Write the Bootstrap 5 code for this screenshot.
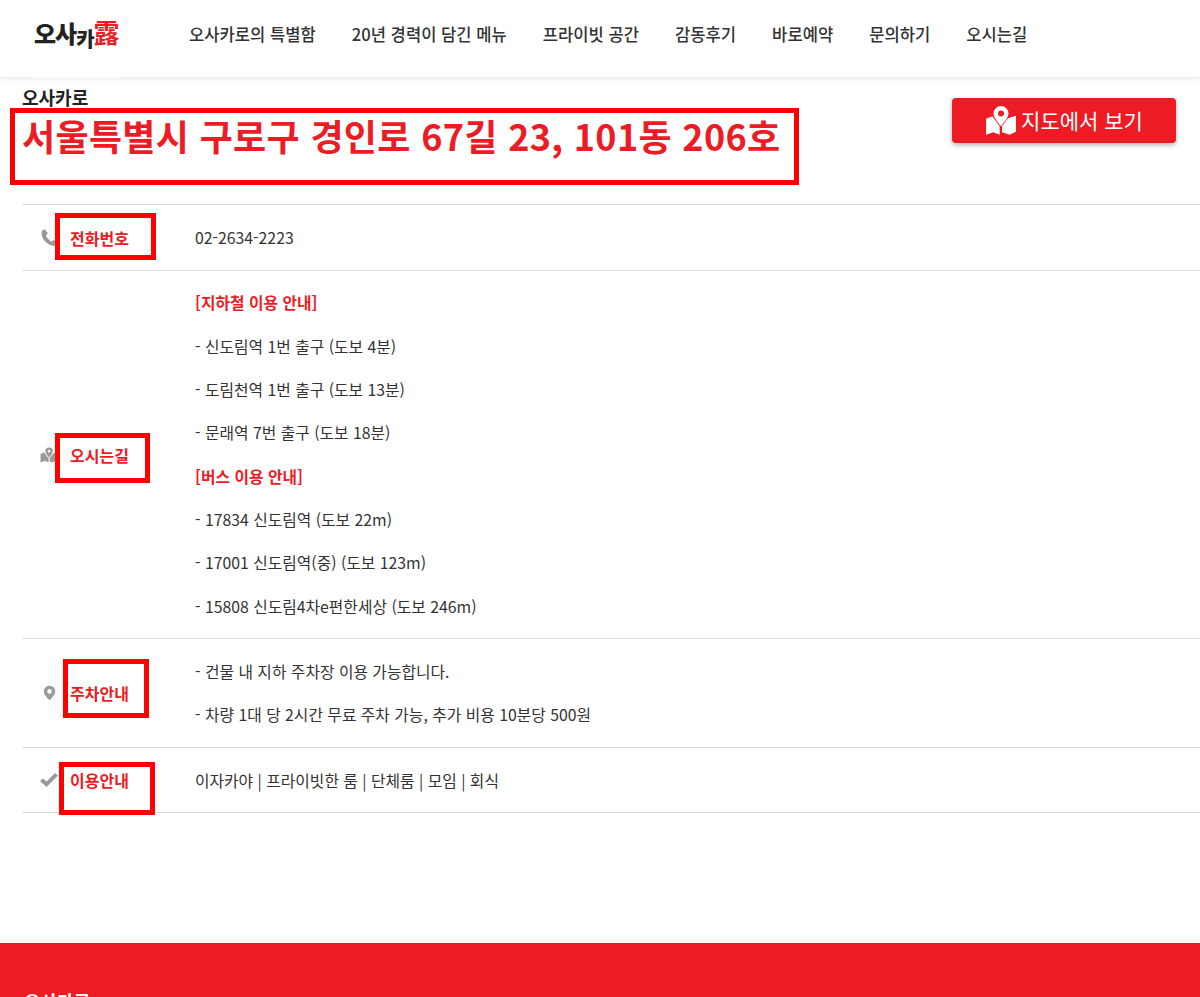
<!DOCTYPE html>
<html lang="ko">
<head>
  <meta charset="UTF-8" />
  <meta name="viewport" content="width=device-width, initial-scale=1.0"/>
  <title>오사카로 오시는길</title>
  <link href="https://cdn.jsdelivr.net/npm/bootstrap@5.3.3/dist/css/bootstrap.min.css" rel="stylesheet">
  <style>
    html, body { margin: 0; }
    body {
      font-family: "Noto Sans CJK KR", "Noto Sans", sans-serif;
      color: #333;
      background: #fff;
      height: 997px;
      overflow: hidden;
    }
    .top-bar {
      height: 77px;
      padding: 0;
      background: #fff;
      box-shadow: 0 1px 5px rgba(0,0,0,.12);
    }
    .logo-box {
      width: 86px;
      height: 78px;
      margin-left: 34px;
      margin-right: 69px;
      background: #fff;
      position: relative;
      padding-top: 15px;
      white-space: nowrap;
      line-height: 34px;
      text-decoration: none;
    }
    .logo-ko { font-size: 24px; font-weight: 900; color: #222; letter-spacing: -1px; }
    .logo-ko small { font-size: 20px; font-weight: 900; vertical-align: -4px; letter-spacing: -2px; }
    .logo-han { font-size: 26px; font-weight: 700; color: #ed1c24; margin-left: 1px; }
    .top-menu { gap: 36px; margin-top: -9px; }
    .top-menu .nav-link {
      padding: 0;
      font-size: 16.6px;
      font-weight: 500;
      color: #333;
    }
    .place-head {
      padding: 9px 24px 0 22px;
      height: 127px;
    }
    .place-name { font-size: 18px; font-weight: 700; color: #222; line-height: 22px; }
    .place-addr { font-size: 36px; font-weight: 700; color: #ed1c24; line-height: 55px; margin: 0; letter-spacing: .33px; }
    .map-btn {
      width: 224px;
      height: 45px;
      margin-top: 12px;
      padding: 0;
      background: #ed1c24;
      border: 0;
      border-radius: 4px;
      box-shadow: 0 2px 5px rgba(0,0,0,.3);
      color: #fff;
      font-size: 21px;
      font-weight: 400;
      line-height: 1;
    }
    .info-list { margin-left: 22px; border-top: 1px solid #ddd; }
    .info-row {
      display: flex;
      align-items: center;
      position: relative;
      border-bottom: 1px solid #ddd;
      font-size: 15.8px;
    }
    .info-icon { width: 48px; padding-left: 18px; flex: none; display: flex; }
    .info-icon svg { fill: #999; }
    .info-label { width: 125px; flex: none; color: #ed1c24; font-weight: 700; font-size: 16px; }
    .info-body p { margin: 0; line-height: 23px; }
    .info-body p + p { margin-top: 20.3px; }
    .info-red { color: #ed1c24; font-weight: 700; }
    .mark-box { position: absolute; border: 5px solid #f00; pointer-events: none; }
    .page-foot {
      margin-top: 130px;
      height: 120px;
      background: #ed1c24;
      color: #fff;
      padding: 47px 24px;
      font-size: 18px;
      font-weight: 700;
      line-height: 22px;
    }
  </style>
</head>
<body>
  <nav class="navbar top-bar align-items-center flex-nowrap justify-content-start">
    <a class="logo-box" href="#"><span class="logo-ko">오사<small>카</small></span><span class="logo-han">露</span></a>
    <ul class="nav top-menu">
      <li class="nav-item"><a class="nav-link" href="#">오사카로의 특별함</a></li>
      <li class="nav-item"><a class="nav-link" href="#">20년 경력이 담긴 메뉴</a></li>
      <li class="nav-item"><a class="nav-link" href="#">프라이빗 공간</a></li>
      <li class="nav-item"><a class="nav-link" href="#">감동후기</a></li>
      <li class="nav-item"><a class="nav-link" href="#">바로예약</a></li>
      <li class="nav-item"><a class="nav-link" href="#">문의하기</a></li>
      <li class="nav-item"><a class="nav-link" href="#">오시는길</a></li>
    </ul>
  </nav>

  <div class="place-head d-flex justify-content-between align-items-start position-relative">
    <div>
      <div class="place-name">오사카로</div>
      <h1 class="place-addr">서울특별시 구로구 경인로 67길 23, 101동 206호</h1>
    </div>
    <button class="btn map-btn d-flex align-items-center justify-content-center gap-1" type="button">
      <svg width="32" height="32" viewBox="0 0 30 30" fill="#fff"><path d="M15 1a7 7 0 0 0-7 7c0 4 4 8 7 12 3-4 7-8 7-12a7 7 0 0 0-7-7zm0 4.200a2.800 2.800 0 1 1 0 5.600 2.800 2.800 0 0 1 0-5.600z"/><path d="M1 13l6-2.500.8 1.500 6 8V28l-6-2.500L1 28zM16 20l5.500-7.500 7.500-2.500v15l-6 3-7-2.500z"/></svg>
      <span>지도에서 보기</span>
    </button>
    <div class="mark-box" style="left:10px;top:31px;width:789px;height:77px"></div>
  </div>

  <div class="info-list">
    <div class="info-row" style="height:66px">
      <div class="info-icon"><svg width="19" height="19" viewBox="0 0 24 24"><path d="M6 1.500 2.500 3.500C1 8 3 13 6.500 17c3.500 3.500 8.500 6 12.500 5.500l3-3.500-4.500-4-3 2C12 16 8.500 12 7.500 9l2.500-2.500z"/></svg></div>
      <div class="info-label">전화번호</div>
      <div class="info-body"><p>02-2634-2223</p></div>
      <div class="mark-box" style="left:33px;top:8px;width:101px;height:47px"></div>
    </div>
    <div class="info-row" style="height:368px">
      <div class="info-icon"><svg width="16" height="16" viewBox="0 0 30 30"><path d="M17 1a7 7 0 0 0-7 7c0 4 4 8 7 12 3-4 7-8 7-12a7 7 0 0 0-7-7zm0 4.500a2.500 2.500 0 1 1 0 5 2.500 2.500 0 0 1 0-5z"/><path d="M1 13l7-3 1 2 7 9v8l-7-3-8 3zM18 21l6-8 6-3v16l-7 3-5-2z"/></svg></div>
      <div class="info-label">오시는길</div>
      <div class="info-body">
        <p class="info-red">[지하철 이용 안내]</p>
        <p>- 신도림역 1번 출구 (도보 4분)</p>
        <p>- 도림천역 1번 출구 (도보 13분)</p>
        <p>- 문래역 7번 출구 (도보 18분)</p>
        <p class="info-red">[버스 이용 안내]</p>
        <p>- 17834 신도림역 (도보 22m)</p>
        <p>- 17001 신도림역(중) (도보 123m)</p>
        <p>- 15808 신도림4차e편한세상 (도보 246m)</p>
      </div>
      <div class="mark-box" style="left:33px;top:162px;width:95px;height:50px"></div>
    </div>
    <div class="info-row" style="height:109px">
      <div class="info-icon"><svg width="16" height="18" viewBox="0 0 16 18" style="margin-left:3px;width:13px"><path d="M8 0a7 7 0 0 0-7 7c0 4 4 7.500 7 11 3-3.500 7-7 7-11a7 7 0 0 0-7-7zm0 4.200a2.800 2.800 0 1 1 0 5.600 2.800 2.800 0 0 1 0-5.600z"/></svg></div>
      <div class="info-label">주차안내</div>
      <div class="info-body">
        <p>- 건물 내 지하 주차장 이용 가능합니다.</p>
        <p>- 차량 1대 당 2시간 무료 주차 가능, 추가 비용 10분당 500원</p>
      </div>
      <div class="mark-box" style="left:41px;top:20px;width:86px;height:59px"></div>
    </div>
    <div class="info-row" style="height:65px">
      <div class="info-icon"><svg width="18" height="14" viewBox="0 0 18 14"><path d="M0 8l3-2.500 3.500 3L15 0l3 2.500L6.500 14z"/></svg></div>
      <div class="info-label">이용안내</div>
      <div class="info-body"><p>이자카야 | 프라이빗한 룸 | 단체룸 | 모임 | 회식</p></div>
      <div class="mark-box" style="left:37px;top:14px;width:96px;height:53px"></div>
    </div>
  </div>

  <footer class="page-foot">오사카로</footer>
</body>
</html>
